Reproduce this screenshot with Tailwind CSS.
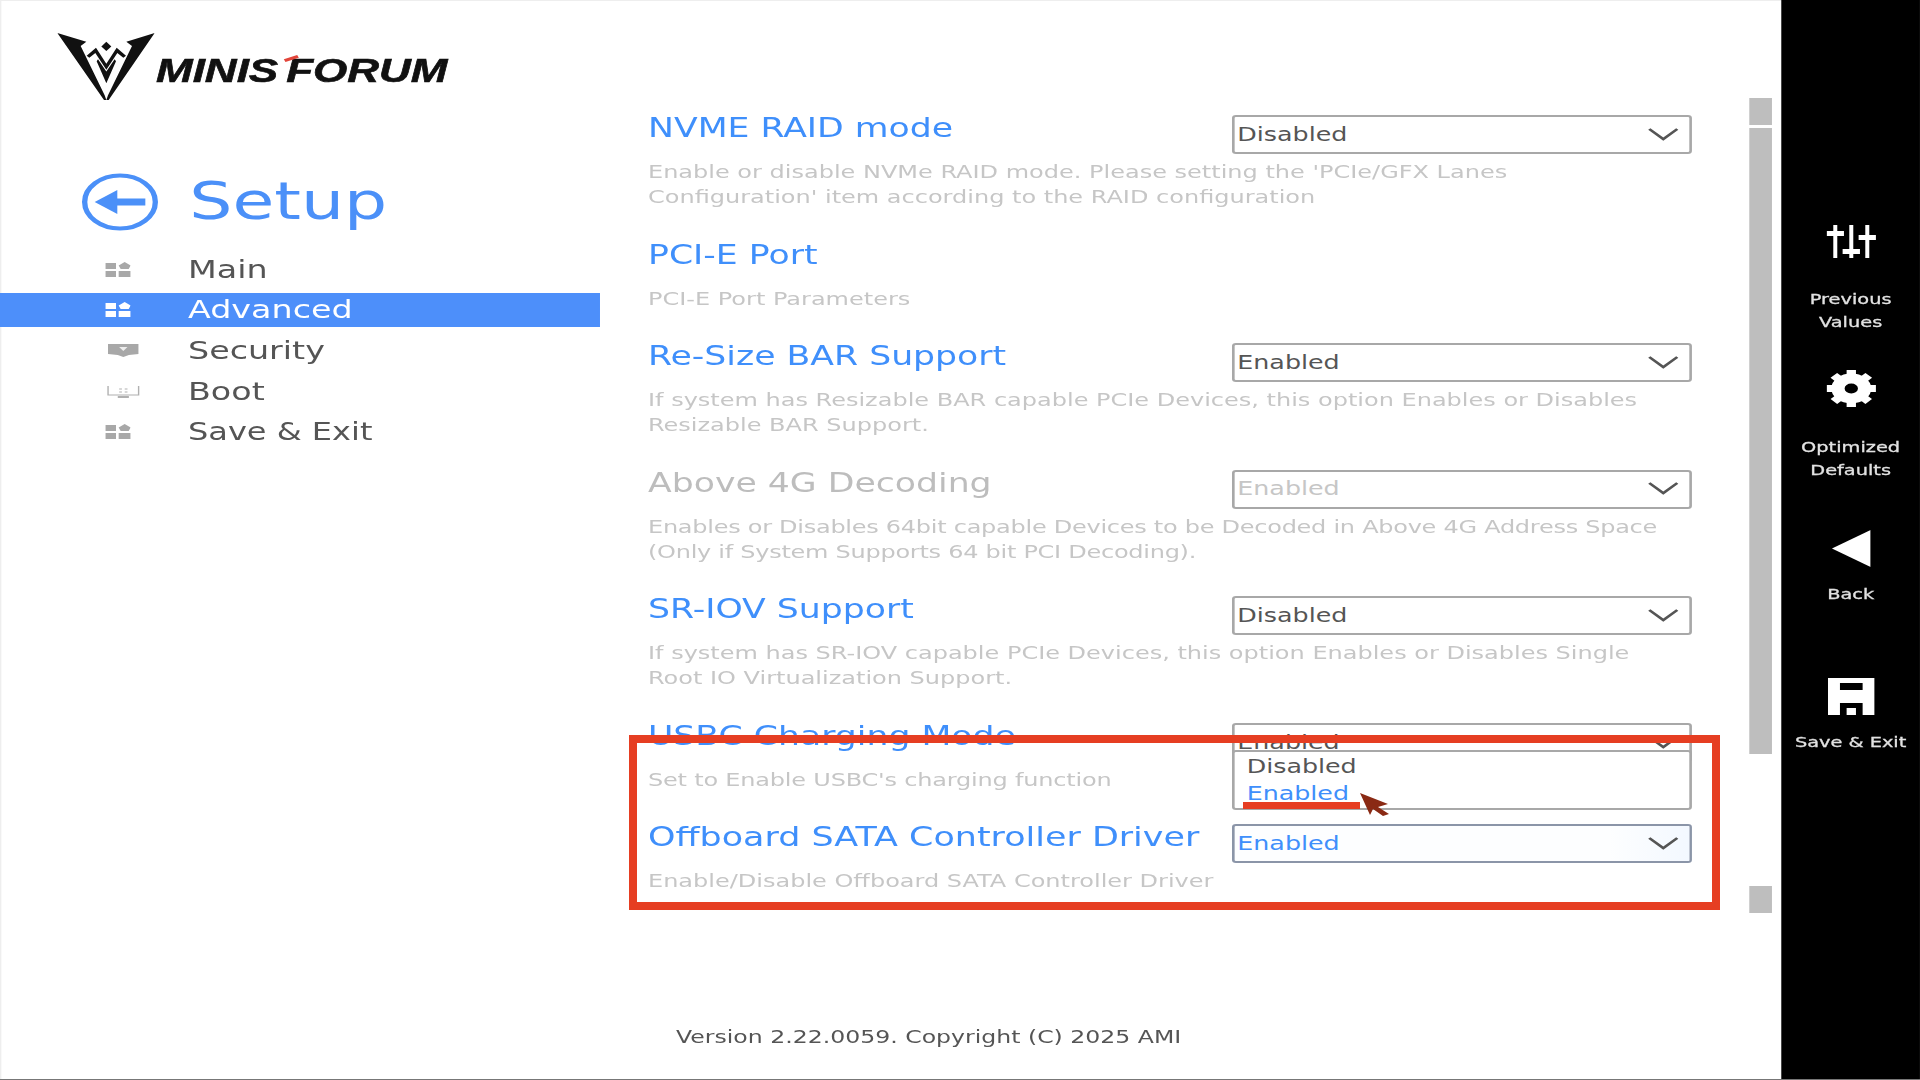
<!DOCTYPE html>
<html lang="en">
<head>
  <meta charset="UTF-8">
  <title>Setup</title>
  <script src="https://cdn.jsdelivr.net/npm/@tailwindcss/browser@4"></script>
</head>
<body class="relative w-[1920px] h-[1080px] overflow-hidden bg-white">
  <!-- the firmware screen is 1440 wide, shown stretched to 1920 -->
  <div class="flex w-[1440px] h-[1080px] border-b border-[#777] origin-top-left scale-x-[1.3333] shadow-[inset_1px_1px_0_#eee] font-['DejaVu_Sans',sans-serif]">

    <aside class="w-[450px] shrink-0 pt-[33px]">
      <div class="flex pl-[43px] h-[67px]">
        <svg class="w-[73px] h-[67px] shrink-0" viewBox="50 40 292 200" preserveAspectRatio="none" fill="#111">
          <path d="M50 40 L137 66 L120 79 L192 226 L197 240 L190 240 Z"/>
          <path d="M342 40 L257 66 L274 79 L202 226 L197 240 L204 240 Z"/>
          <path d="M197 66 L212 80 L197 94 L182 80 Z"/>
          <path d="M138 108 L166 84 L197 132 L228 84 L256 108 L248 114 L230 100 L197 150 L164 100 L146 114 Z"/>
          <path d="M172 118 L197 155 L222 118 L226 124 L197 190 L168 124 Z"/>
        </svg>
        <div class="relative ml-[1px] mt-[19px] h-[38px] leading-[38px] text-[33px] font-bold italic text-[#111] font-['Liberation_Sans',sans-serif] whitespace-nowrap [-webkit-text-stroke:0.6px_#111]">
          MINIS<span class="ml-[6px]">FORUM</span>
          <span class="absolute left-[96px] top-[5px] w-[11px] h-[3px] bg-[#e2453a] -rotate-[24deg]"></span>
        </div>
      </div>

      <div class="flex items-center gap-[23px] pl-[61px] mt-[73px] h-[58px]">
        <svg class="w-[58px] h-[58px] shrink-0" viewBox="0 0 58 58" fill="none" stroke="#4b90f8">
          <circle cx="29" cy="29" r="26.500" stroke-width="4"/>
          <path d="M48 29 H18" stroke-width="7"/>
          <path d="M10 29 L27 17 V41 Z" fill="#4b90f8" stroke="none"/>
        </svg>
        <span class="text-[51px] leading-[58px] text-[#4b90f8]">Setup</span>
      </div>

      <nav class="flex flex-col gap-[6.7px] mt-[21px] text-[25px] text-[#555]">
        <a class="flex items-center h-[34px] pl-[79px] pt-[1px]">
          <svg class="w-[19px] h-[16px] mr-[43px] shrink-0" viewBox="0 0 19 16" fill="#a8a8a8"><path d="M0 1h8v6H0zM0 9h8v6H0zM10 9h9v6h-9zM14.500 0L19 3.500 17.500 7h-6L10 3.500z"/></svg>
          Main
        </a>
        <a class="flex items-center h-[34px] pl-[79px] pt-[1px] bg-[#4d8ffa] text-white">
          <svg class="w-[19px] h-[16px] mr-[43px] shrink-0" viewBox="0 0 19 16" fill="#fff"><path d="M0 1h8v6H0zM0 9h8v6H0zM10 9h9v6h-9zM14.500 0L19 3.500 17.500 7h-6L10 3.500z"/></svg>
          Advanced
        </a>
        <a class="flex items-center h-[34px] pl-[81px] pt-[1px]">
          <svg class="w-[23px] h-[15px] mr-[37px] shrink-0" viewBox="0 0 22 15" preserveAspectRatio="none" fill="#a8a8a8"><path d="M0 1h22v10l-7 1-4 2-4-2-7-1z"/><path d="M8 4h6l-3 4z" fill="#eee"/></svg>
          Security
        </a>
        <a class="flex items-center h-[34px] pl-[80px] pt-[1px]">
          <svg class="w-[25px] h-[15px] mr-[36px] shrink-0" viewBox="0 0 24 15" preserveAspectRatio="none" fill="none" stroke="#b0b0b0"><path d="M1 2v9h22V2"/><path d="M8 13h8" stroke-width="2"/><path d="M9 5h2M13 5h2M9 8h2M13 8h2"/></svg>
          Boot
        </a>
        <a class="flex items-center h-[34px] pl-[79px] pt-[1px]">
          <svg class="w-[19px] h-[16px] mr-[43px] shrink-0" viewBox="0 0 19 16" fill="#a8a8a8"><path d="M0 1h8v6H0zM0 9h8v6H0zM10 9h9v6h-9zM14.500 0L19 3.500 17.500 7h-6L10 3.500z"/></svg>
          <span class="text-[24px]">Save &amp; Exit</span>
        </a>
      </nav>
    </aside>

    <main class="flex flex-col w-[819px] shrink-0 pl-[36px] pt-[109px] pb-[30px]">
      <section class="h-[126.5px]">
        <div class="flex justify-between h-[38px]">
          <h2 class="text-[26px] leading-[38px] text-[#3f8ffb]">NVME RAID mode</h2>
          <div class="relative flex items-center justify-between w-[345px] h-[39px] mt-[6px] pl-[2px] pr-[8.500px] pb-[1px] border-2 border-[#a8a8a8] rounded-[3px] bg-white text-[19px] text-[#555]">
            Disabled
            <svg class="w-[23px] h-[13px]" viewBox="0 0 23 13" fill="none" stroke="#555" stroke-width="2.400"><path d="M1 1l10.500 10L22 1"/></svg>
          </div>
        </div>
        <p class="mt-[12px] text-[18px] leading-[25px] text-[#c6c6c6] whitespace-nowrap">Enable or disable NVMe RAID mode. Please setting the 'PCIe/GFX Lanes<br>Configuration' item according to the RAID configuration</p>
      </section>

      <section class="h-[101.5px]">
        <div class="h-[38px]">
          <h2 class="text-[26px] leading-[38px] text-[#3f8ffb]">PCI-E Port</h2>
        </div>
        <p class="mt-[12px] text-[18px] leading-[25px] text-[#c6c6c6] whitespace-nowrap">PCI-E Port Parameters</p>
      </section>

      <section class="h-[126.5px]">
        <div class="flex justify-between h-[38px]">
          <h2 class="text-[26px] leading-[38px] text-[#3f8ffb]">Re-Size BAR Support</h2>
          <div class="relative flex items-center justify-between w-[345px] h-[39px] mt-[6px] pl-[2px] pr-[8.500px] pb-[1px] border-2 border-[#a8a8a8] rounded-[3px] bg-white text-[19px] text-[#555]">
            Enabled
            <svg class="w-[23px] h-[13px]" viewBox="0 0 23 13" fill="none" stroke="#555" stroke-width="2.400"><path d="M1 1l10.500 10L22 1"/></svg>
          </div>
        </div>
        <p class="mt-[12px] text-[18px] leading-[25px] text-[#c6c6c6] whitespace-nowrap">If system has Resizable BAR capable PCIe Devices, this option Enables or Disables<br>Resizable BAR Support.</p>
      </section>

      <section class="h-[126.5px]">
        <div class="flex justify-between h-[38px]">
          <h2 class="text-[26px] leading-[38px] text-[#bdbdbd]">Above 4G Decoding</h2>
          <div class="relative flex items-center justify-between w-[345px] h-[39px] mt-[6px] pl-[2px] pr-[8.500px] pb-[1px] border-2 border-[#a8a8a8] rounded-[3px] bg-white text-[19px] text-[#c6c6c6]">
            Enabled
            <svg class="w-[23px] h-[13px]" viewBox="0 0 23 13" fill="none" stroke="#555" stroke-width="2.400"><path d="M1 1l10.500 10L22 1"/></svg>
          </div>
        </div>
        <p class="mt-[12px] text-[18px] leading-[25px] tracking-[-0.2px] text-[#c6c6c6] whitespace-nowrap">Enables or Disables 64bit capable Devices to be Decoded in Above 4G Address Space<br>(Only if System Supports 64 bit PCI Decoding).</p>
      </section>

      <section class="h-[127px]">
        <div class="flex justify-between h-[38px]">
          <h2 class="text-[26px] leading-[38px] text-[#3f8ffb]">SR-IOV Support</h2>
          <div class="relative flex items-center justify-between w-[345px] h-[39px] mt-[6px] pl-[2px] pr-[8.500px] pb-[1px] border-2 border-[#a8a8a8] rounded-[3px] bg-white text-[19px] text-[#555]">
            Disabled
            <svg class="w-[23px] h-[13px]" viewBox="0 0 23 13" fill="none" stroke="#555" stroke-width="2.400"><path d="M1 1l10.500 10L22 1"/></svg>
          </div>
        </div>
        <p class="mt-[12px] text-[18px] leading-[25px] text-[#c6c6c6] whitespace-nowrap">If system has SR-IOV capable PCIe Devices, this option Enables or Disables Single<br>Root IO Virtualization Support.</p>
      </section>

      <section class="h-[101px]">
        <div class="flex justify-between h-[38px]">
          <h2 class="text-[26px] leading-[38px] text-[#3f8ffb]">USBC Charging Mode</h2>
          <div class="relative flex items-center justify-between w-[345px] h-[39px] mt-[6px] pl-[2px] pr-[8.500px] pb-[1px] border-2 border-[#a8a8a8] rounded-[3px] bg-white text-[19px] text-[#555]">
            Enabled
            <svg class="w-[23px] h-[13px]" viewBox="0 0 23 13" fill="none" stroke="#555" stroke-width="2.400"><path d="M1 1l10.500 10L22 1"/></svg>
            <div class="absolute left-[-2px] top-[25px] z-10 w-[345px] h-[60px] px-[9px] pt-[1px] border-2 border-[#a8a8a8] rounded-[3px] bg-white text-[19px] leading-[27px]">
              <div class="text-[#555]">Disabled</div>
              <div class="text-[#3f8ffb]">Enabled</div>
            </div>
          </div>
        </div>
        <p class="mt-[12px] text-[18px] leading-[25px] tracking-[-0.15px] text-[#c6c6c6] whitespace-nowrap">Set to Enable USBC's charging function</p>
      </section>

      <section class="h-[101px]">
        <div class="flex justify-between h-[38px]">
          <h2 class="text-[26.200px] leading-[38px] text-[#3f8ffb]">Offboard SATA Controller Driver</h2>
          <div class="relative flex items-center justify-between w-[345px] h-[39px] mt-[6px] pl-[2px] border-2 border-[#8b95a8] rounded-[3px] bg-[#fdfeff] text-[19px] text-[#3f8ffb]">
            <span class="pb-[1px]">Enabled</span>
            <span class="flex items-center justify-end w-[60px] h-full bg-linear-to-r from-[#fdfeff] to-[#f3f8ff] pr-[8.500px]">
              <svg class="w-[23px] h-[13px]" viewBox="0 0 23 13" fill="none" stroke="#555" stroke-width="2.400"><path d="M1 1l10.500 10L22 1"/></svg>
            </span>
          </div>
        </div>
        <p class="mt-[12px] text-[18px] leading-[25px] text-[#c6c6c6] whitespace-nowrap">Enable/Disable Offboard SATA Controller Driver</p>
      </section>

      <footer class="mt-auto ml-[21px] text-[17.700px] leading-[24px] text-[#555] whitespace-nowrap">Version 2.22.0059. Copyright (C) 2025 AMI</footer>
    </main>

    <div class="flex flex-col w-[16.5px] shrink-0 ml-[43px] pt-[98px]">
      <div class="h-[27px] bg-[#bebebe]"></div>
      <div class="h-[626px] mt-[3px] bg-[#bebebe]"></div>
      <div class="h-[27px] mt-[132px] bg-[#bebebe]"></div>
    </div>

    <aside class="flex flex-col items-center w-[104px] shrink-0 ml-[7.5px] bg-black text-[#e2e2e2] text-[14.500px] leading-[23px] text-center [-webkit-text-stroke:0.3px_#e2e2e2]">
      <svg class="w-[37px] h-[33px] mt-[225px]" viewBox="0 0 37 33" fill="#fff">
        <path d="M5 0h3v33H5zM17 0h3v33h-3zM29 0h3v33h-3z"/>
        <path d="M0 6h13v5H0zM12 24h13v5H12zM24 10h13v5H24z"/>
      </svg>
      <div class="mt-[29.5px]">Previous<br>Values</div>

      <svg class="w-[37px] h-[37px] mt-[36px]" viewBox="0 0 37 37">
        <circle cx="18.500" cy="18.500" r="10" fill="none" stroke="#fff" stroke-width="10"/>
        <path d="M18.500 0v37M0 18.500h37M5.400 5.400l26.200 26.200M31.600 5.400L5.400 31.600" stroke="#fff" stroke-width="7" stroke-dasharray="7 23 7"/>
      </svg>
      <div class="mt-[29px]">Optimized<br>Defaults</div>

      <svg class="w-[29px] h-[37px] mt-[48px]" viewBox="0 0 29 37" fill="#fff"><path d="M0 18.500L29 0v37z"/></svg>
      <div class="mt-[16.5px]">Back</div>

      <svg class="w-[35px] h-[37px] mt-[71.5px]" viewBox="0 0 35 37" fill="#fff">
        <path fill-rule="evenodd" d="M0 0h35v37H26V25H9v12H0zM9 5v7h17V5z"/>
        <path d="M14 30h7v7h-7z"/>
      </svg>
      <div class="mt-[16.5px] whitespace-nowrap">Save &amp; Exit</div>
    </aside>
  </div>

  <!-- red annotation drawn on top of the screenshot -->
  <div class="absolute left-[629px] top-[735px] w-[1091px] h-[175px] border-[8px] border-[#e63e22] pointer-events-none"></div>
  <div class="absolute left-[1243px] top-[802px] w-[117px] h-[7px] bg-[#e63e22]"></div>
  <svg class="absolute left-[1360px] top-[793px] w-[29px] h-[23px]" viewBox="0 0 29 23" fill="#8a2a14"><path d="M0 0L28 11L18 14L29 21L23 23L13 16L10 22Z"/></svg>
</body>
</html>
